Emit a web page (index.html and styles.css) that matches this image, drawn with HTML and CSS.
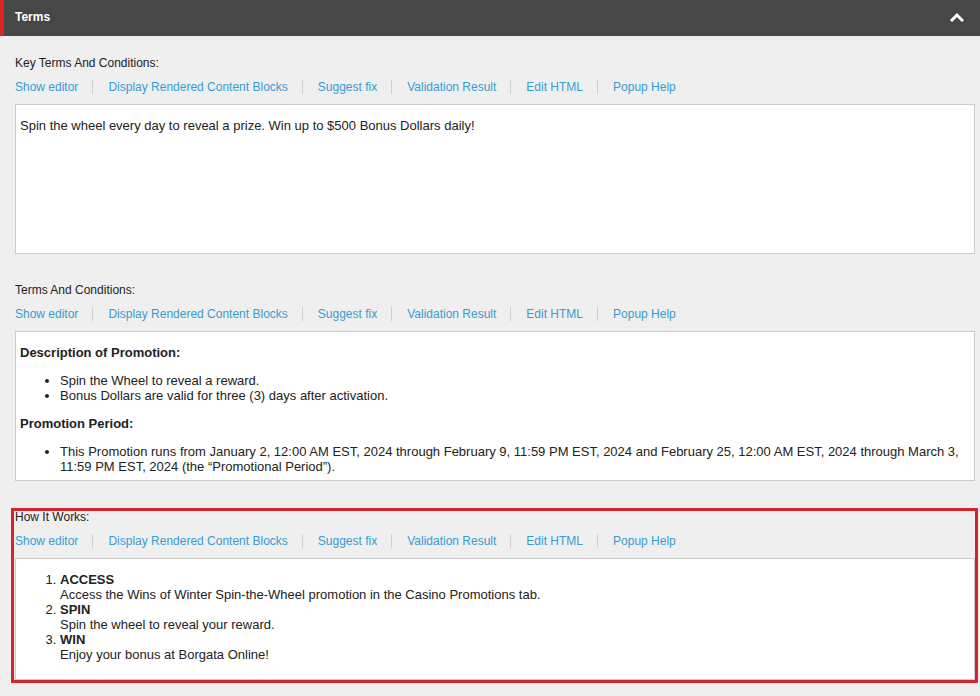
FILE: index.html
```html
<!DOCTYPE html>
<html>
<head>
<meta charset="utf-8">
<link rel="stylesheet" href="styles.css">
</head>
<body>
<div class="panel-header">
  <span class="panel-title">Terms</span>
  <svg class="chevron" width="14" height="10" viewBox="0 0 14 10"><polyline points="2,8 7,3 12,8" fill="none" stroke="#fff" stroke-width="3" stroke-linecap="square"/></svg>
</div>
<div class="panel-body">
  <div class="field">
    <div class="field-label">Key Terms And Conditions:</div>
    <div class="actions">
      <a class="action">Show editor</a>
      <a class="action">Display Rendered Content Blocks</a>
      <a class="action">Suggest fix</a>
      <a class="action">Validation Result</a>
      <a class="action">Edit HTML</a>
      <a class="action">Popup Help</a>
    </div>
    <div class="content-box fixed">
      <p>Spin the wheel every day to reveal a prize. Win up to $500 Bonus Dollars daily!</p>
    </div>
  </div>

  <div class="field">
    <div class="field-label">Terms And Conditions:</div>
    <div class="actions">
      <a class="action">Show editor</a>
      <a class="action">Display Rendered Content Blocks</a>
      <a class="action">Suggest fix</a>
      <a class="action">Validation Result</a>
      <a class="action">Edit HTML</a>
      <a class="action">Popup Help</a>
    </div>
    <div class="content-box fixed">
      <h4>Description of Promotion:</h4>
      <ul>
        <li>Spin the Wheel to reveal a reward.</li>
        <li>Bonus Dollars are valid for three (3) days after activation.</li>
      </ul>
      <h4>Promotion Period:</h4>
      <ul>
        <li>This Promotion runs from January 2, 12:00 AM EST, 2024 through February 9, 11:59 PM EST, 2024 and February 25, 12:00 AM EST, 2024 through March 3, 11:59 PM EST, 2024 (the “Promotional Period”).</li>
      </ul>
    </div>
  </div>

  <div class="field highlighted">
    <div class="field-label">How It Works:</div>
    <div class="actions">
      <a class="action">Show editor</a>
      <a class="action">Display Rendered Content Blocks</a>
      <a class="action">Suggest fix</a>
      <a class="action">Validation Result</a>
      <a class="action">Edit HTML</a>
      <a class="action">Popup Help</a>
    </div>
    <div class="content-box auto">
      <ol>
        <li><b>ACCESS</b><br>Access the Wins of Winter Spin-the-Wheel promotion in the Casino Promotions tab.</li>
        <li><b>SPIN</b><br>Spin the wheel to reveal your reward.</li>
        <li><b>WIN</b><br>Enjoy your bonus at Borgata Online!</li>
      </ol>
    </div>
  </div>
</div>
</body>
</html>
```
FILE: styles.css
```css
* { box-sizing: border-box; }
html, body {
  margin: 0;
  padding: 0;
  background: #efefef;
  font-family: "Liberation Sans", Arial, sans-serif;
  color: #222;
}
.panel-header {
  height: 36px;
  background: #474747;
  border-left: 4px solid #d9251d;
  display: flex;
  align-items: center;
  justify-content: space-between;
  padding: 0 16px 0 11px;
}
.panel-title {
  color: #fff;
  font-weight: bold;
  font-size: 12px;
  line-height: 16px;
  margin-top: -2px;
}
.chevron { display: block; margin-top: -3px; }
.panel-body {
  padding: 18px 5px 0 15px;
}
.field {
  position: relative;
  margin-bottom: 27px;
}
.field-label {
  font-size: 12px;
  line-height: 16px;
  padding-top: 1px;
  margin-bottom: 8px;
  color: #222;
}
.actions {
  display: flex;
  align-items: center;
  height: 16px;
  margin-bottom: 9px;
}
.action {
  font-size: 12px;
  line-height: 14px;
  color: #3a9bd2;
  padding: 0 14px 0 15px;
  border-left: 1px solid #cfcfcf;
  cursor: pointer;
}
.action:first-child {
  padding-left: 0;
  border-left: 0;
}
.content-box {
  background: #fff;
  border: 1px solid #cccccc;
  padding: 0 4px;
  font-size: 13px;
  line-height: 15px;
  color: #222;
  overflow: hidden;
}
.content-box.fixed { height: 150px; }
.content-box.auto { padding: 0 4px 4px; }
.content-box p { margin: 13px 0; }
.content-box h4 {
  margin: 13px 0;
  font-size: 13px;
  line-height: 15px;
  font-weight: bold;
}
.content-box ul, .content-box ol {
  margin: 13px 0;
  padding-left: 40px;
}
.highlighted::after {
  content: "";
  position: absolute;
  top: 0;
  left: -4px;
  right: -3px;
  bottom: -3px;
  border: 3px solid #d7222f;
  pointer-events: none;
}
```
